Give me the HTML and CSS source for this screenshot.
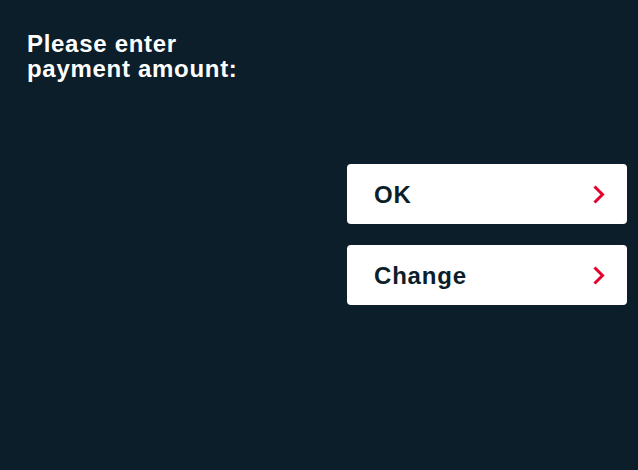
FILE: index.html
```html
<!DOCTYPE html>
<html>
<head>
<meta charset="utf-8">
<link rel="stylesheet" href="styles.css">
</head>
<body>
<div class="screen">
  <h1 class="title">Please enter<br>payment amount:</h1>
  <div class="actions">
    <button class="btn"><span>OK</span>
      <svg class="chev" width="12" height="19" viewBox="0 0 12 19"><path d="M1.5 1.5 L9.5 9.5 L1.5 17.5" fill="none" stroke="#e4002b" stroke-width="3"/></svg>
    </button>
    <button class="btn"><span>Change</span>
      <svg class="chev" width="12" height="19" viewBox="0 0 12 19"><path d="M1.5 1.5 L9.5 9.5 L1.5 17.5" fill="none" stroke="#e4002b" stroke-width="3"/></svg>
    </button>
  </div>
</div>
</body>
</html>
```
FILE: styles.css
```css
html, body { margin: 0; padding: 0; }
body { background: #0b1e2a; width: 638px; height: 470px; overflow: hidden; font-family: "Liberation Sans", Arial, sans-serif; }
.screen { padding: 31px 0 0 27px; box-sizing: border-box; height: 470px; }
.title { margin: 0; color: #fff; font-size: 24px; line-height: 25px; font-weight: 700; letter-spacing: 0.7px; }
.actions { display: flex; flex-direction: column; gap: 21px; margin: 83px 0 0 320px; width: 280px; }
.btn { height: 60px; background: #fff; border: none; border-radius: 4px; display: flex; align-items: center; justify-content: space-between; padding: 0 22px 0 27px; font-family: inherit; font-size: 24px; font-weight: 700; letter-spacing: 0.8px; color: #0b1e2a; cursor: pointer; }
.btn span { position: relative; top: 1px; }
.chev { display: block; }
```
